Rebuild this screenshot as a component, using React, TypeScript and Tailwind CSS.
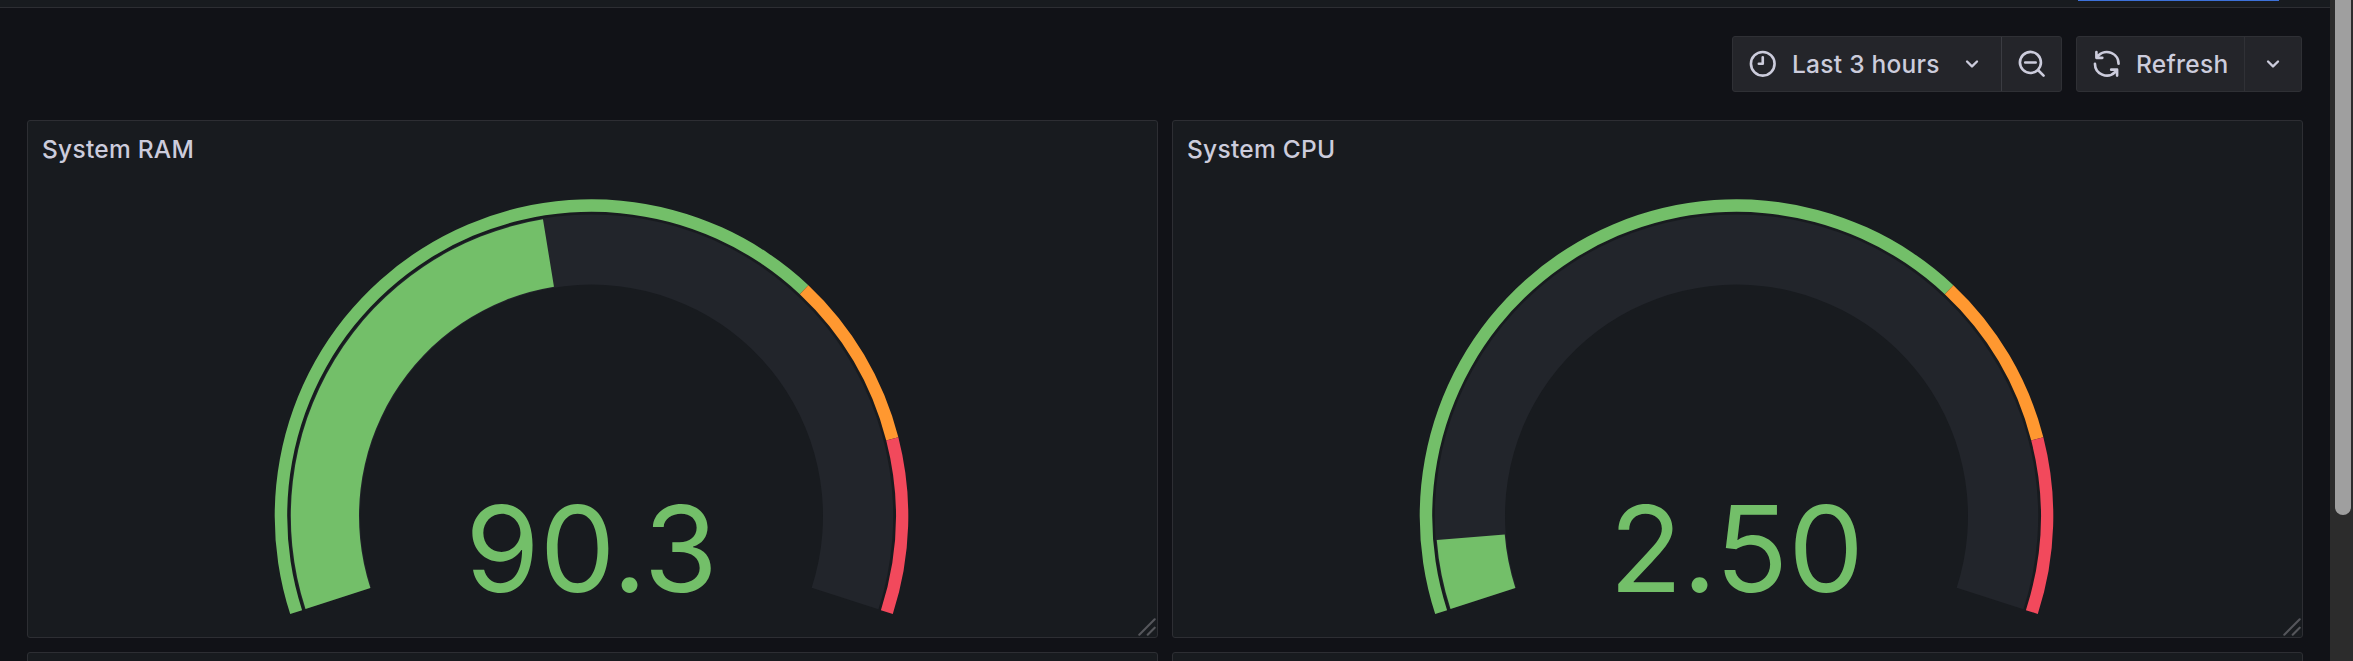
const R = { outer: 316.8, ringInner: 304.3, trackOuter: 301.7, trackInner: 231.5 };
const GREEN = "#73bf69";

const ICONS = {
  clock:
    "M12,2A10,10,0,1,0,22,12,10,10,0,0,0,12,2Zm0,18a8,8,0,1,1,8-8A8,8,0,0,1,12,20ZM12,6a1,1,0,0,0-1,1v4H9a1,1,0,0,0,0,2h3a1,1,0,0,0,1-1V7A1,1,0,0,0,12,6Z",
  zoomOut:
    "M21.71,20.29,18,16.61A9,9,0,1,0,16.61,18l3.68,3.68a1,1,0,0,0,1.42,0A1,1,0,0,0,21.71,20.29ZM11,18a7,7,0,1,1,7-7A7,7,0,0,1,11,18Zm4-8H7a1,1,0,0,0,0,2h8a1,1,0,0,0,0-2Z",
  sync:
    "M19.91,15.51H15.38a1,1,0,0,0,0,2h2.4A8,8,0,0,1,4,12a1,1,0,0,0-2,0,10,10,0,0,0,16.88,7.23V21a1,1,0,0,0,2,0V16.5A1,1,0,0,0,19.91,15.51ZM12,2A10,10,0,0,0,5.12,4.77V3a1,1,0,0,0-2,0V7.5a1,1,0,0,0,1,1h4.5a1,1,0,0,0,0-2H6.22A8,8,0,0,1,20,12a1,1,0,0,0,2,0A10,10,0,0,0,12,2Z",
  angleDown:
    "M17,9.17a1,1,0,0,0-1.41,0L12,12.71,8.46,9.17a1,1,0,0,0-1.41,0,1,1,0,0,0,0,1.42l4.24,4.24a1,1,0,0,0,1.42,0L17,10.59A1,1,0,0,0,17,9.17Z",
};

function Icon({ name, size = 31.5 }: { name: keyof typeof ICONS; size?: number }) {
  return (
    <svg className="shrink-0" width={size} height={size} viewBox="0 0 24 24" fill="currentColor">
      <path d={ICONS[name]} />
    </svg>
  );
}

type GaugeProps = { title: string; value: string; fraction: number };

function arc(cx: number, cy: number, r0: number, r1: number, from: number, to: number) {
  const p = (r: number, f: number) => {
    const a = ((162 + 216 * f) * Math.PI) / 180;
    return `${(cx + r * Math.cos(a)).toFixed(2)} ${(cy + r * Math.sin(a)).toFixed(2)}`;
  };
  const large = (to - from) * 216 > 180 ? 1 : 0;
  return `M${p(r1, from)}A${r1} ${r1} 0 ${large} 1 ${p(r1, to)}L${p(r0, to)}A${r0} ${r0} 0 ${large} 0 ${p(r0, from)}Z`;
}

function Grip() {
  return (
    <svg className="absolute right-px bottom-px" width="20" height="20" fill="none" stroke="#55565b" strokeWidth="2.1" strokeLinecap="round">
      <path d="M3.3 18.7 18.7 3.3M11.7 18.7l7-7" />
    </svg>
  );
}

function Panel({ title, value, fraction }: GaugeProps) {
  const cx = 563.5;
  const cy = 395.1;
  return (
    <section className="relative flex h-[518px] flex-col rounded-[3px] border border-[#2d2e33] bg-[#181b1f]">
      <h2 className="h-[47px] pt-[9px] pl-[14px] text-[24.5px] leading-[38px] font-medium tracking-[0.26px]">{title}</h2>
      <svg className="block w-full flex-1" viewBox="0 47 1129 469" preserveAspectRatio="xMinYMin meet" fill="none">
        <path d={arc(cx, cy, R.trackInner, R.trackOuter, 0, 1)} fill="#22252b" />
        <path d={arc(cx, cy, R.trackInner + 1, R.trackOuter - 1, 0, fraction)} fill={GREEN} />
        <path d={arc(cx, cy, R.ringInner, R.outer, 0, 0.7)} fill={GREEN} />
        <path d={arc(cx, cy, R.ringInner, R.outer, 0.7, 0.85)} fill="#ff9830" />
        <path d={arc(cx, cy, R.ringInner, R.outer, 0.85, 1)} fill="#f2495c" />
        <text x={cx} y="471" textAnchor="middle" fontSize="120" fill={GREEN}>{value}</text>
      </svg>
      <Grip />
    </section>
  );
}

export default function App() {
  return (
    <div className="flex h-[661px] w-[2353px] overflow-hidden bg-[#111217] font-['Inter',sans-serif] text-[#ccccdc]">
      <div className="w-[2330px] shrink-0">
        <div className="flex h-2 justify-end border-b border-[#2d2e33] bg-[#181b1f] pr-[51px]">
          <div className="h-px w-[201px] bg-[#3d71d9]" />
        </div>
        <div className="flex h-28 items-start justify-end gap-[14px] pt-7 pr-[28px] text-[24.5px] font-medium tracking-[0.26px]">
          <div className="flex h-14 w-[330px] rounded-[3px] border border-[#2f3035] bg-[#24252a]">
            <div className="flex w-[269px] shrink-0 items-center border-r border-[#3b3c42] pl-[14px]">
              <Icon name="clock" />
              <span className="ml-[13.5px] w-[148px] whitespace-nowrap">Last 3 hours</span>
              <span className="ml-[18px]"><Icon name="angleDown" size={28} /></span>
            </div>
            <div className="flex flex-1 items-center justify-center">
              <Icon name="zoomOut" />
            </div>
          </div>
          <div className="flex h-14 w-[226px] rounded-[3px] border border-[#2f3035] bg-[#24252a]">
            <div className="flex w-[168px] shrink-0 items-center border-r border-[#303136] pl-[14px]">
              <Icon name="sync" />
              <span className="ml-[13.5px]">Refresh</span>
            </div>
            <div className="flex flex-1 items-center justify-center">
              <Icon name="angleDown" size={28} />
            </div>
          </div>
        </div>
        <main className="grid grid-cols-[1131px_1131px] gap-[14px] pl-[27px]">
          <Panel title="System RAM" value="90.3" fraction={0.457} />
          <Panel title="System CPU" value="2.50" fraction={0.0622} />
          <section className="h-20 rounded-[3px] border border-[#2d2e33] bg-[#181b1f]" />
          <section className="h-20 rounded-[3px] border border-[#2d2e33] bg-[#181b1f]" />
        </main>
      </div>
      <div className="h-[661px] w-[23px] bg-[#2c2c2c] pl-[5px]">
        <div className="h-[515px] w-4 rounded-b-full bg-[#9f9f9f]" />
      </div>
    </div>
  );
}
